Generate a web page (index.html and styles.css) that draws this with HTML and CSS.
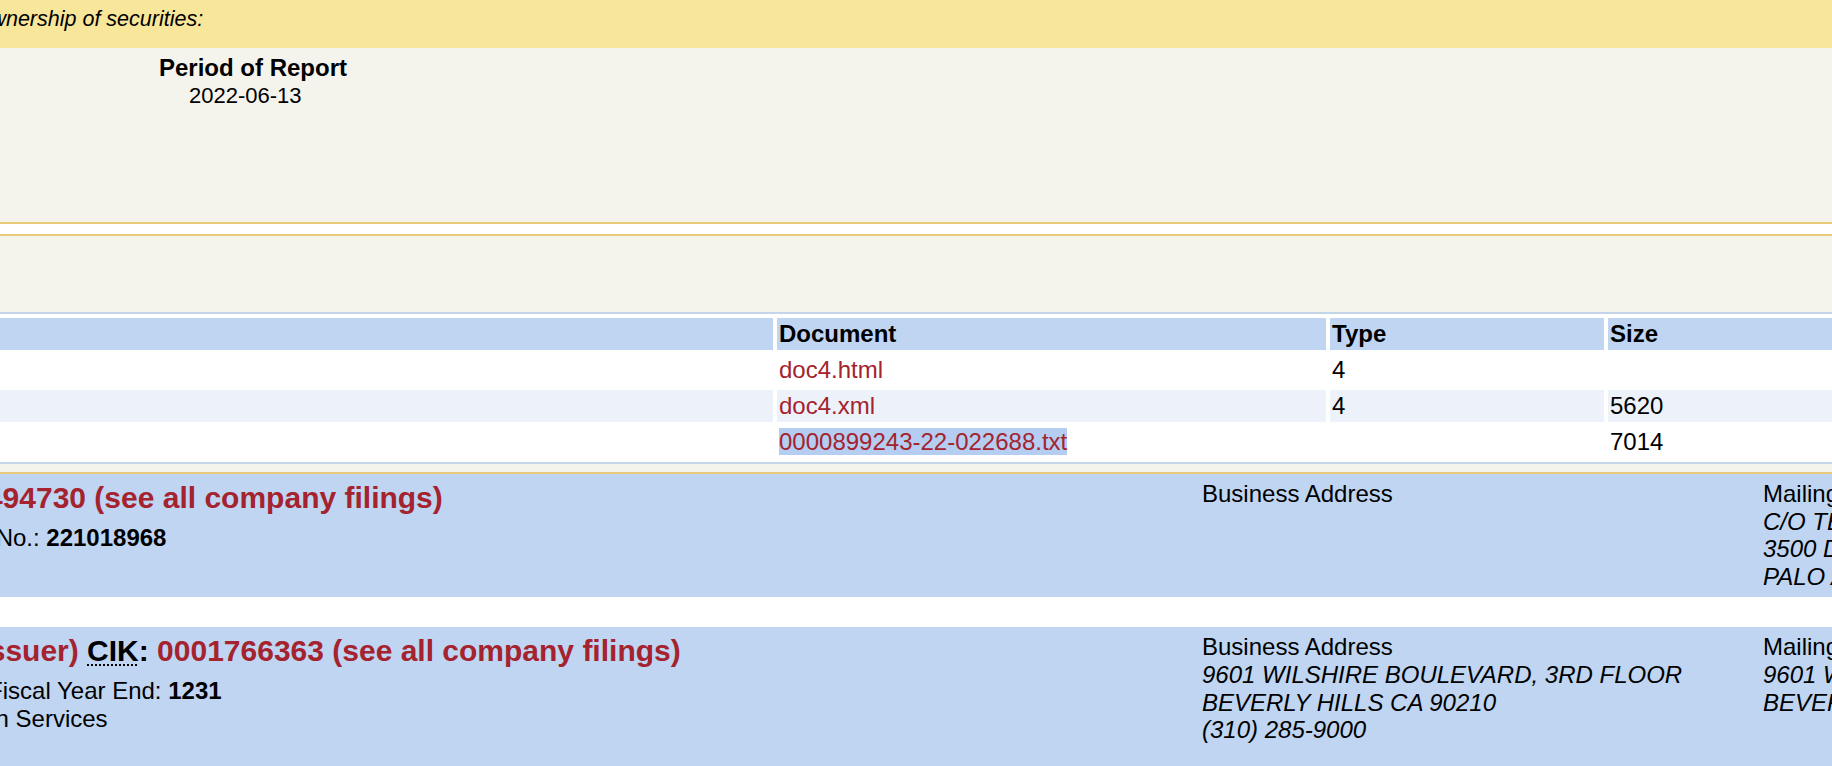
FILE: index.html
```html
<!DOCTYPE html>
<html lang="en">
<head>
    <meta charset="UTF-8">
    <title>EDGAR Filing Detail</title>
    <link rel="stylesheet" href="styles.css">
</head>
<body>
<div class="page">
    <div class="form-div">
        <div class="form-header">
            <div class="form-name"><strong>Form 4</strong> - Statement of changes in beneficial ownership of securities:</div>
            <div class="sec-num">SEC Accession <abbr title="Number">No.</abbr> 0000899243-22-022688</div>
        </div>
        <div class="form-content">
            <div class="form-grouping">
                <div class="info-head">Filing Date</div>
                <div class="info">2022-06-15</div>
                <div class="info-head">Accepted</div>
                <div class="info">2022-06-15 21:05:20</div>
                <div class="info-head">Documents</div>
                <div class="info">2</div>
            </div>
            <div class="form-grouping">
                <div class="info-head">Period of Report</div>
                <div class="info">2022-06-13</div>
            </div>
        </div>
    </div>

    <div class="form-div files">
        <p class="table-title">Document Format Files</p>
        <table class="table-file">
            <colgroup>
                <col class="c-seq">
                <col class="c-desc">
                <col class="c-doc">
                <col class="c-type">
                <col class="c-size">
            </colgroup>
            <tr>
                <th><abbr title="Sequence Number">Seq</abbr></th>
                <th>Description</th>
                <th>Document</th>
                <th>Type</th>
                <th>Size</th>
            </tr>
            <tr>
                <td>1</td>
                <td>FORM 4</td>
                <td><a href="#">doc4.html</a></td>
                <td>4</td>
                <td>&nbsp;</td>
            </tr>
            <tr class="blue-row">
                <td>1</td>
                <td>FORM 4</td>
                <td><a href="#">doc4.xml</a></td>
                <td>4</td>
                <td>5620</td>
            </tr>
            <tr>
                <td>&nbsp;</td>
                <td>Complete submission text file</td>
                <td><a class="selected" href="#">0000899243-22-022688.txt</a></td>
                <td>&nbsp;</td>
                <td>7014</td>
            </tr>
        </table>
    </div>

    <div class="filer-div">
        <div class="company-info">
            <div class="company-name"><span class="filer">Smith Ann (Reporting)</span> <abbr title="Central Index Key">CIK</abbr>: <a href="#">0001494730 (see all company filings)</a></div>
            <p class="ident-info">Type: <strong>4</strong> | Act: <strong>34</strong> | File No.: <a href="#"><strong>001-40373</strong></a> | Film No.: <strong>221018968</strong></p>
        </div>
        <div class="mailer">Business Address</div>
        <div class="mailer">Mailing Address
            <span class="mailer-address">C/O TESLA, INC.</span>
            <span class="mailer-address">3500 DEER CREEK ROAD</span>
            <span class="mailer-address">PALO ALTO CA 94304</span>
        </div>
    </div>

    <div class="filer-div">
        <div class="company-info">
            <div class="company-name"><span class="filer">Endeavor Group Holdings, Inc. (Issuer)</span> <abbr title="Central Index Key">CIK</abbr>: <a href="#">0001766363 (see all company filings)</a></div>
            <p class="ident-info"><abbr title="Internal Revenue Service Number">IRS No.</abbr>: <strong>833340244</strong> | State of Incorp.: <strong>DE</strong> | Fiscal Year End: <strong>1231</strong><br>
                <abbr title="Standard Industrial Code">SIC</abbr>: <strong>7900</strong> Services-Amusement &amp; Recreation Services<br>
                Office of Trade &amp; Services</p>
        </div>
        <div class="mailer">Business Address
            <span class="mailer-address">9601 WILSHIRE BOULEVARD, 3RD FLOOR</span>
            <span class="mailer-address">BEVERLY HILLS CA 90210</span>
            <span class="mailer-address">(310) 285-9000</span>
        </div>
        <div class="mailer">Mailing Address
            <span class="mailer-address">9601 WILSHIRE BOULEVARD, 3RD FLOOR</span>
            <span class="mailer-address">BEVERLY HILLS CA 90210</span>
        </div>
    </div>
</div>
</body>
</html>
```

FILE: styles.css
```css
html, body {
    margin: 0;
    padding: 0;
    overflow: hidden;
    background-color: #fff;
}

body {
    font-family: "Liberation Sans", Arial, Helvetica, sans-serif;
    font-size: 24px;
    color: #000;
}

a {
    color: #a4232f;
    text-decoration: none;
}

abbr {
    text-decoration: none;
}

/* page is wider than the window and scrolled sideways */
.page {
    width: 2900px;
    margin-left: -500px;
}

/* form blocks */
.form-div {
    background-color: #f5f4ec;
    border-bottom: 2px solid #e9c97a;
}

.form-div + .form-div {
    margin-top: 10px;
    border-top: 2px solid #e9c97a;
}

.form-header {
    display: flex;
    justify-content: space-between;
    height: 48px;
    box-sizing: border-box;
    padding: 6px 10px 0 53px;
    background-color: #f8e69a;
    font-size: 21.5px;
    line-height: 26px;
}

.form-name {
    font-style: italic;
}

.form-content {
    display: flex;
    height: 174px;
    box-sizing: border-box;
    padding: 6px 0 0 20px;
}

.form-grouping {
    width: 639px;
}

.info-head {
    font-weight: bold;
    line-height: 27.6px;
}

.info {
    margin: 1px 0 0 30px;
    font-size: 22px;
    line-height: 26px;
}

/* document table */
.files {
    padding-bottom: 8px;
}

.table-title {
    margin: 20px 0 28px 10px;
    line-height: 28px;
}

.table-file {
    width: 2704px;
    margin-left: 10px;
    table-layout: fixed;
    border: 2px solid #c5d5e9;
    border-spacing: 4px;
    background-color: #fff;
}

.c-seq { width: 137px; }
.c-desc { width: 1116px; }
.c-doc { width: 549px; }
.c-type { width: 274px; }
.c-size { width: 600px; }

.table-file th,
.table-file td {
    padding: 2px;
    line-height: 28px;
    text-align: left;
    white-space: nowrap;
    overflow: hidden;
}

.table-file th {
    background-color: #bfd5f2;
    font-weight: bold;
}

.blue-row td {
    background-color: #edf2fa;
}

.selected {
    background-color: #b4cdf0;
}

/* filer blocks */
.filer-div {
    display: flex;
    margin-bottom: 30px;
    padding: 6px 76px 7px 22px;
    background-color: #bfd5f2;
    line-height: 27.6px;
}

.company-info {
    flex: 1;
}

.company-name {
    font-size: 30px;
    line-height: 35px;
    font-weight: bold;
}

.company-name .filer,
.company-name a {
    color: #a4232f;
}

.company-name abbr {
    text-decoration: underline dotted;
    text-decoration-thickness: 2px;
    text-underline-offset: 3px;
}

.ident-info {
    margin: 9px 0 0;
}

.mailer {
    width: 561px;
}

.mailer-address {
    display: block;
    font-style: italic;
}
```
